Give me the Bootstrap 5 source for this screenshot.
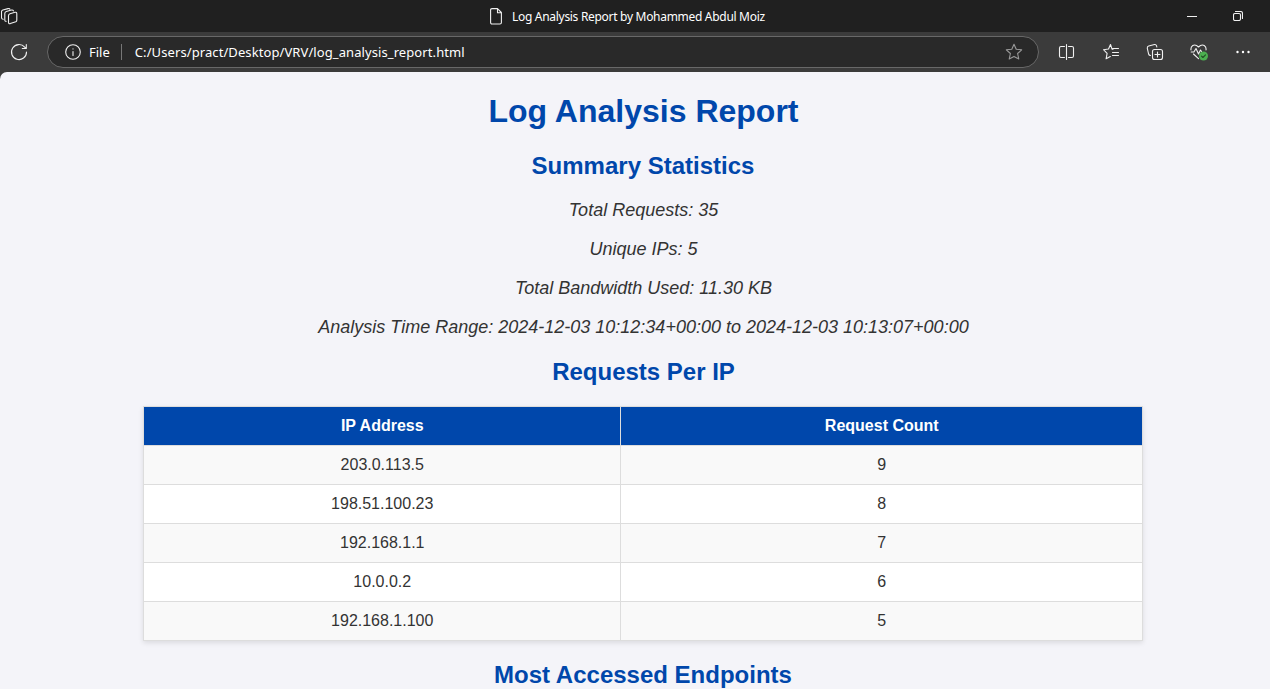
<!DOCTYPE html>
<html lang="en">
<head>
<meta charset="utf-8">
<meta name="viewport" content="width=device-width, initial-scale=1">
<title>Log Analysis Report by Mohammed Abdul Moiz</title>
<link href="https://cdn.jsdelivr.net/npm/bootstrap@5.3.0/dist/css/bootstrap.min.css" rel="stylesheet">
<style>
body { background: #3b3b3b; color: #fff; font-family: "Noto Sans", sans-serif; height: 689px; }
svg { display: block; fill: none; stroke: #f0f0f0; stroke-width: 1.1; stroke-linecap: round; stroke-linejoin: round; flex: none; }
.titlebar { height: 32px; background: #202020; padding: 0 27px 0 1px; }
.titlebar .window-title { font-size: 12px; line-height: 16px; letter-spacing: -.3px; padding-top: 2px; margin-left: 10px; }
.window-heading { margin-left: 472px; }
.window-buttons { gap: 36px; }
.toolbar { height: 40px; background: #3b3b3b; padding: 0 18px 0 10px; }
.address { width: 992px; height: 32px; margin-left: 19px; padding: 0 15px 0 17px; background: #292929; border: 1px solid #686868; font-size: 13px; line-height: 18px; }
.address .divider { width: 1px; height: 16px; background: #777; margin: 0 13px 0 11px; }
.address .url { letter-spacing: .09px; }
.address .bookmark { stroke: #999; }
.tools { gap: 26px; margin-left: 19px; }
.page { height: 617px; background: #f4f4f9; color: #333; border-top-left-radius: 7px; font-family: "Liberation Sans", Arial, sans-serif; padding: 19px 0 0 16px; }
.page h1, .page h2 { color: #0047ab; font-weight: 700; margin: 0; }
.page h1 { font-size: 32px; line-height: 40px; padding-left: 1px; }
.page h2 { font-size: 24px; line-height: 30px; }
.page .summary h2 { margin: 20px 0 10px; }
.page .requests h2 { margin-top: 10px; padding-left: 1px; }
.summary p { font-size: 18px; line-height: 39px; margin: 0; padding-left: 1px; }
.report-table { width: 1000px; border-collapse: collapse; margin: 19px auto; color: #333; background: #fff; box-shadow: 0 2px 5px rgba(0,0,0,.1); font-size: 16px; line-height: 18px; table-layout: fixed; }
.report-table th, .report-table td { border: 1px solid #ddd; padding: 10px 10px 10px 10.5px; height: 39px; }
.report-table th { background: #0047ab; color: #fff; }
.report-table tbody tr:nth-child(odd) { background: #f9f9f9; }
.report-table .ip-column { width: 477px; }
</style>
</head>
<body class="overflow-hidden">
<header>
  <div class="titlebar d-flex align-items-center">
    <svg width="17" height="17" viewBox="0 0 17 17"><path d="M9 5.800 14 4.300q1.800-.4 1.800 1.400v6.500q0 1-1 1.500L9.300 15.600Q7.500 16 7.500 14.300V7.700q0-1.400 1.500-1.900zM5.300 13.300q-1.500.200-1.500-1.300V5.500Q3.800 4 5.300 3.500L10.500 2q1.500-.300 2 .900M2.200 11.300Q.5 11.200.5 9.500V3.800q0-1.300 1.300-1.800L7 .6q1.300-.300 1.900.500"/></svg>
    <div class="d-flex align-items-center window-heading">
      <svg width="12" height="17" viewBox="0 0 12 17"><path d="M2 .6h5.500L11.400 4.500v10q0 1.500-1.500 1.500H2Q.6 16 .6 14.500V2Q.6.6 2 .6zM7.500.8v4h3.700"/></svg>
      <span class="window-title text-nowrap">Log Analysis Report by Mohammed Abdul Moiz</span>
    </div>
    <div class="window-buttons d-flex align-items-center ms-auto">
      <svg width="10" height="10" viewBox="0 0 10 10"><path d="M0 5.500h10"/></svg>
      <svg width="10" height="10" viewBox="0 0 10 10"><rect x=".5" y="2.500" width="7" height="7" rx="1.500"/><path d="M2.500.5h5q2 0 2 2v5"/></svg>
    </div>
  </div>
  <div class="toolbar d-flex align-items-center">
    <svg width="18" height="18" viewBox="0 0 18 18"><path d="M16.500 9A7.500 7.500 0 1 1 14.700 4.200L16 5.500M16.300 1.500v4h-4"/></svg>
    <div class="address rounded-pill d-flex align-items-center">
      <svg width="16" height="16" viewBox="0 0 16 16"><circle cx="8" cy="8" r="7.300"/><path d="M8 7.500v4M8 4.900v.100"/></svg>
      <span class="file-label ms-2">File</span><span class="divider"></span>
      <span class="url text-nowrap">C:/Users/pract/Desktop/VRV/log_analysis_report.html</span>
      <svg class="bookmark ms-auto" width="18" height="18" viewBox="0 0 18 18"><path d="m9 1.200 2.200 5 5.500.600-4.100 3.700 1.200 5.500L9 13.400 4.200 16l1.200-5.500-4.100-3.700 5.500-.600z"/></svg>
    </div>
    <div class="tools d-flex align-items-center">
      <svg width="18" height="18" viewBox="0 0 18 18"><path d="M6.500 3.500H3Q1.500 3.500 1.500 5v8q0 1.500 1.500 1.500h3.500M10.500 3.500H14q1.500 0 1.500 1.500v8q0 1.500-1.500 1.500h-3.500M8.500 1.500v15"/></svg>
      <svg width="18" height="18" viewBox="0 0 18 18"><path d="M11 6.200H10L8.500 1.500 6.500 6l-5 .700 3.600 3.600-1 5.500 4.200-2.300M10.500 5.500H16.500M10.500 9.500H16.500M10.500 12.500H16.500"/></svg>
      <svg width="18" height="18" viewBox="0 0 18 18"><rect x="6.500" y="6.500" width="10" height="10" rx="2"/><path d="M11.500 9v5M9 11.500h5M4.500 12.500Q3 12.500 2.600 11L1.300 5.300Q1 3.500 2.700 3L8.500 1.500q1.500-.300 2 1.200l.300 1.300"/></svg>
      <svg width="18" height="18" viewBox="0 0 18 18"><path d="M1 7Q.5 4 2.800 2.500 5.500 1 8.500 4q3-3 5.700-1.500Q16.500 4 16 7M1.200 9h2.700L6 5.500 8.500 11l2-4 1 1.500M3.500 11l5 4.700"/><circle cx="13.500" cy="13" r="4.500" fill="#4caf50" stroke="none"/><path d="m11.500 13.200 1.400 1.300 2.600-2.700" stroke="#234f25"/></svg>
      <svg width="18" height="18" viewBox="0 0 18 18"><g fill="#fff" stroke="none"><circle cx="3.500" cy="9" r="1.200"/><circle cx="9" cy="9" r="1.200"/><circle cx="14.500" cy="9" r="1.200"/></g></svg>
    </div>
  </div>
</header>
<main class="page text-center overflow-hidden">
  <h1>Log Analysis Report</h1>
  <section class="summary">
    <h2>Summary Statistics</h2>
    <p class="fst-italic">Total Requests: 35</p>
    <p class="fst-italic">Unique IPs: 5</p>
    <p class="fst-italic">Total Bandwidth Used: 11.30 KB</p>
    <p class="fst-italic">Analysis Time Range: 2024-12-03 10:12:34+00:00 to 2024-12-03 10:13:07+00:00</p>
  </section>
  <section class="requests">
    <h2>Requests Per IP</h2>
    <table class="report-table">
      <colgroup><col class="ip-column"><col></colgroup>
      <thead><tr><th>IP Address</th><th>Request Count</th></tr></thead>
      <tbody>
        <tr><td>203.0.113.5</td><td>9</td></tr>
        <tr><td>198.51.100.23</td><td>8</td></tr>
        <tr><td>192.168.1.1</td><td>7</td></tr>
        <tr><td>10.0.0.2</td><td>6</td></tr>
        <tr><td>192.168.1.100</td><td>5</td></tr>
      </tbody>
    </table>
  </section>
  <h2>Most Accessed Endpoints</h2>
</main>
<script src="https://cdn.jsdelivr.net/npm/bootstrap@5.3.0/dist/js/bootstrap.bundle.min.js"></script>
</body>
</html>
